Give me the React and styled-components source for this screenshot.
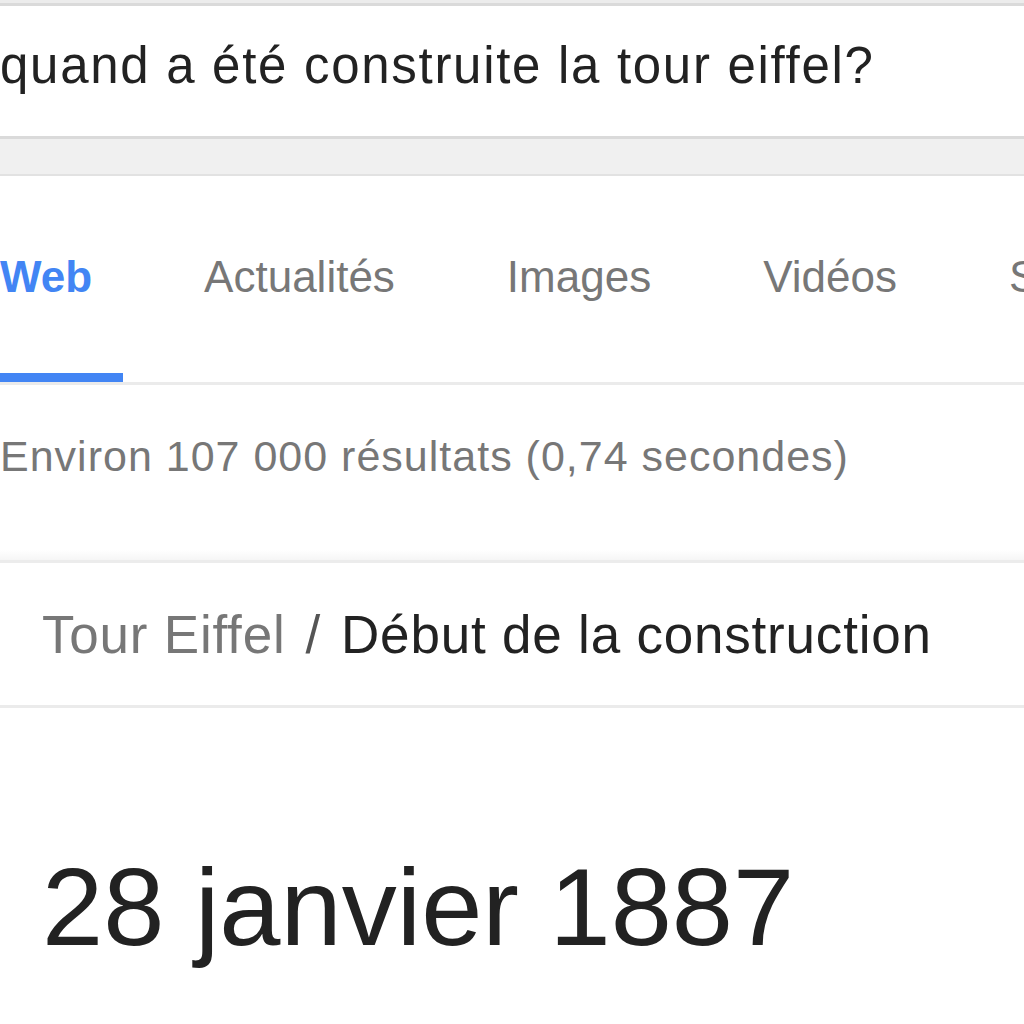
import React from "react";
import styled, { createGlobalStyle } from "styled-components";

const Global = createGlobalStyle`
  html, body { margin: 0; padding: 0; background: #fff; }
  body { font-family: "Liberation Sans", Arial, sans-serif; overflow: hidden; }
`;

const Page = styled.div`
  width: 1024px;
  height: 1024px;
  overflow: hidden;
  display: flex;
  flex-direction: column;
  background: #fff;
`;

const TopStrip = styled.div`
  height: 3px;
  flex: none;
  background: #ececec;
  border-bottom: 3px solid #dadada;
`;

const SearchBox = styled.div`
  height: 130px;
  flex: none;
  box-sizing: border-box;
  display: flex;
  align-items: center;
  padding-bottom: 12px;
  font-size: 51px;
  letter-spacing: 1.7px;
  color: #222;
  white-space: nowrap;
`;

const GreyBand = styled.div`
  height: 35px;
  flex: none;
  background: #f0f0f0;
  border-top: 3px solid #dadada;
  border-bottom: 2px solid #e2e2e2;
`;

const Tabs = styled.div`
  height: 206px;
  flex: none;
  display: flex;
  align-items: stretch;
  gap: 112px;
  border-bottom: 3px solid #ebebeb;
  white-space: nowrap;
`;

const Tab = styled.div`
  position: relative;
  display: flex;
  align-items: center;
  flex: none;
  padding-bottom: 5px;
  font-size: 44px;
  font-weight: ${p => (p.$active ? 700 : 400)};
  color: ${p => (p.$active ? "#4285f4" : "#777")};

  &::after {
    content: "";
    display: ${p => (p.$active ? "block" : "none")};
    position: absolute;
    left: 0;
    bottom: 0;
    width: 123px;
    height: 9px;
    background: #4285f4;
  }
`;

const Stats = styled.div`
  height: 178px;
  flex: none;
  box-sizing: border-box;
  display: flex;
  align-items: center;
  padding-bottom: 32px;
  font-size: 43px;
  letter-spacing: 1px;
  color: #777;
  white-space: nowrap;
  background: linear-gradient(to bottom, #fff 0, #fff 165px, #f3f3f3 178px);
  border-bottom: 3px solid #ececec;
`;

const Card = styled.div`
  display: flex;
  flex-direction: column;
`;

const Crumbs = styled.div`
  height: 145px;
  flex: none;
  box-sizing: border-box;
  display: flex;
  align-items: center;
  padding-left: 42px;
  font-size: 53px;
  letter-spacing: 0.8px;
  white-space: nowrap;
  border-bottom: 3px solid #ebebeb;
`;

const CrumbParent = styled.span`
  color: #777;
`;

const CrumbSep = styled.span`
  color: #555;
  margin: 0 20px;
`;

const CrumbCurrent = styled.span`
  color: #222;
`;

const Answer = styled.div`
  padding: 144px 0 0 42px;
  font-size: 110px;
  color: #222;
  line-height: 1;
  white-space: nowrap;
`;

export default function App() {
  return (
    <Page>
      <Global />
      <TopStrip />
      <SearchBox>quand a été construite la tour eiffel?</SearchBox>
      <GreyBand />
      <Tabs>
        <Tab $active>Web</Tab>
        <Tab>Actualités</Tab>
        <Tab>Images</Tab>
        <Tab>Vidéos</Tab>
        <Tab>Shopping</Tab>
      </Tabs>
      <Stats>Environ 107 000 résultats (0,74 secondes)</Stats>
      <Card>
        <Crumbs>
          <CrumbParent>Tour Eiffel</CrumbParent>
          <CrumbSep>/</CrumbSep>
          <CrumbCurrent>Début de la construction</CrumbCurrent>
        </Crumbs>
        <Answer>28 janvier 1887</Answer>
      </Card>
    </Page>
  );
}
